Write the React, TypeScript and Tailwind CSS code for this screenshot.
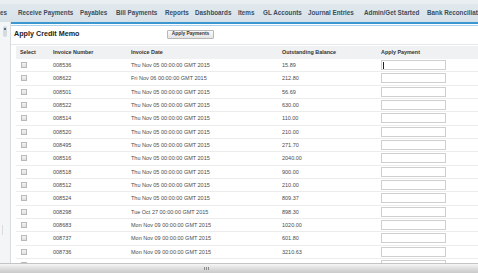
import React from 'react'

const NAV = [
  { label: 'es', w: 'w-[18px]' },
  { label: 'Receive Payments', w: 'w-[62px]' },
  { label: 'Payables', w: 'w-[36px]' },
  { label: 'Bill Payments', w: 'w-[49px]' },
  { label: 'Reports', w: 'w-[30px]' },
  { label: 'Dashboards', w: 'w-[43px]' },
  { label: 'Items', w: 'w-[25px]' },
  { label: 'GL Accounts', w: 'w-[45px]' },
  { label: 'Journal Entries', w: 'w-[56px]' },
  { label: 'Admin/Get Started', w: 'w-[63px]' },
  { label: 'Bank Reconciliation', w: 'w-[80px]' },
]

const ROWS: [string, string, string][] = [
  ['008536', 'Thu Nov 05 00:00:00 GMT 2015', '15.89'],
  ['008622', 'Fri Nov 06 00:00:00 GMT 2015', '212.80'],
  ['008501', 'Thu Nov 05 00:00:00 GMT 2015', '56.69'],
  ['008522', 'Thu Nov 05 00:00:00 GMT 2015', '630.00'],
  ['008514', 'Thu Nov 05 00:00:00 GMT 2015', '110.00'],
  ['008520', 'Thu Nov 05 00:00:00 GMT 2015', '210.00'],
  ['008495', 'Thu Nov 05 00:00:00 GMT 2015', '271.70'],
  ['008516', 'Thu Nov 05 00:00:00 GMT 2015', '2040.00'],
  ['008518', 'Thu Nov 05 00:00:00 GMT 2015', '900.00'],
  ['008512', 'Thu Nov 05 00:00:00 GMT 2015', '210.00'],
  ['008524', 'Thu Nov 05 00:00:00 GMT 2015', '809.37'],
  ['008298', 'Tue Oct 27 00:00:00 GMT 2015', '898.30'],
  ['008683', 'Mon Nov 09 00:00:00 GMT 2015', '1020.00'],
  ['008737', 'Mon Nov 09 00:00:00 GMT 2015', '601.80'],
  ['008736', 'Mon Nov 09 00:00:00 GMT 2015', '3210.63'],
  ['008738', 'Mon Nov 09 00:00:00 GMT 2015', '2434.00'],
]

const COLS = 'grid grid-cols-[37px_78px_151px_99px_1fr] items-center'

export default function App() {
  return (
    <div className="w-[478px] h-[273px] overflow-hidden bg-white flex flex-col font-['Liberation_Sans',Arial,sans-serif]">
      {/* top strip + tab bar */}
      <div className="h-[4px] bg-[#e9eef1]" />
      <div className="h-[18px] bg-gradient-to-b from-[#e1e9ee] to-[#d7e1e8] flex items-center overflow-hidden whitespace-nowrap">
        {NAV.map((n) => (
          <span key={n.label} className={`${n.w} shrink-0 text-[6.3px] font-bold text-[#3a4d5e]`}>
            {n.label}
          </span>
        ))}
      </div>

      {/* body */}
      <div className="flex flex-1 min-h-0">
        {/* collapsed sidebar */}
        <div className="w-[10px] shrink-0 bg-[#f3f5f6] flex flex-col items-center pt-[4px]">
          <div className="w-[4px] h-[11px] rounded-[2px] bg-[#d5dade] flex justify-center pt-[2px]">
            <span className="w-[2px] h-[2px] rounded-full bg-[#2b4a6b]" />
          </div>
          <div className="mt-auto mb-[28px] w-px h-[10px] bg-[#dcdcdc] self-start ml-[2px]" />
        </div>

        {/* panel */}
        <div className="flex-1 min-w-0 flex flex-col border-l border-[#d8dcdf]">
          <div className="h-[1.5px] bg-[#3b97cf]" />
          <div className="h-[1px] bg-white" />
          <div className="h-[1px] bg-[#a9d3ec]" />

          {/* title row */}
          <div className="h-[19px] shrink-0 flex items-center pl-[3px] border-b border-[#e6e8ea]">
            <span className="w-[153px] shrink-0 text-[7.2px] font-bold text-[#222]">Apply Credit Memo</span>
            <button className="h-[9px] w-[47px] rounded-[1px] border border-[#b8b8b8] bg-gradient-to-b from-[#fafafa] to-[#e4e4e4] text-[4.8px] font-bold text-[#333] leading-none">
              Apply Payments
            </button>
          </div>

          {/* table */}
          <div className="flex-1 min-h-0 overflow-hidden pl-[5px] pt-[1.5px]">
            <div className={`${COLS} h-[13px] bg-[#f0f1f2] text-[5.4px] font-bold text-[#333]`}>
              <span className="pl-[4px]">Select</span>
              <span>Invoice Number</span>
              <span>Invoice Date</span>
              <span>Outstanding Balance</span>
              <span>Apply Payment</span>
            </div>
            {ROWS.map(([num, date, bal], i) => (
              <div key={num} className={`${COLS} h-[13.33px] border-b border-[#ececec] text-[5.5px] text-[#4a4a4a]`}>
                <span className="pl-[5px] flex">
                  <span className="w-[6px] h-[6px] border border-[#b9b9b9] bg-gradient-to-b from-[#f4f4f4] to-[#dedede]" />
                </span>
                <span>{num}</span>
                <span>{date}</span>
                <span>{bal}</span>
                <span className="flex">
                  <span className="w-[65px] h-[10px] border border-[#cfcfcf] bg-white flex items-center pl-[1px]">
                    {i === 0 && <span className="w-px h-[7px] bg-[#222]" />}
                  </span>
                </span>
              </div>
            ))}
          </div>
        </div>
      </div>

      {/* horizontal scrollbar */}
      <div className="h-[10px] shrink-0 border-t border-[#c4c4c4] bg-gradient-to-b from-[#f6f6f6] via-[#dedede] to-[#c9c9c9] flex justify-center items-center pr-[66px]">
        <span className="w-[5px] h-[3px] flex gap-px">
          <span className="w-px h-[3px] bg-[#8a8a8a]" />
          <span className="w-px h-[3px] bg-[#8a8a8a]" />
          <span className="w-px h-[3px] bg-[#8a8a8a]" />
        </span>
      </div>
    </div>
  )
}
